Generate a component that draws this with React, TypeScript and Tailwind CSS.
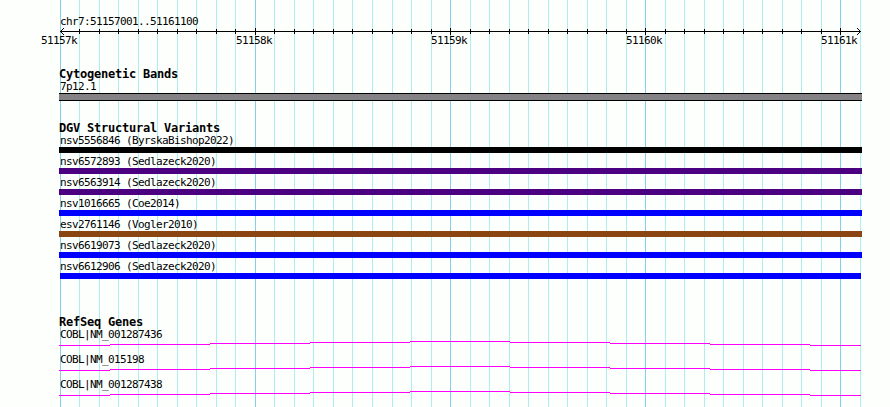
const START = 51157001;
const PX_PER_BASE = 800 / 4100;

const toX = (base: number) => 60 + Math.round((base - START) * PX_PER_BASE);

const gridLines = Array.from({ length: 42 }, (_, i) => ({
  x: toX(51157000 + i * 100),
  major: i % 10 === 0,
}));

const scaleLabels = [
  { x: 41, text: '51157k' },
  { x: 236, text: '51158k' },
  { x: 431, text: '51159k' },
  { x: 626, text: '51160k' },
  { x: 821, text: '51161k' },
];

const variants = [
  { label: 'nsv5556846 (ByrskaBishop2022)', bar: 'bg-black ml-[59px] w-[803px]' },
  { label: 'nsv6572893 (Sedlazeck2020)', bar: 'bg-[#4b0082] ml-[59px] w-[803px]' },
  { label: 'nsv6563914 (Sedlazeck2020)', bar: 'bg-[#4b0082] ml-[59px] w-[803px]' },
  { label: 'nsv1016665 (Coe2014)', bar: 'bg-[#0000ff] ml-[59px] w-[803px]' },
  { label: 'esv2761146 (Vogler2010)', bar: 'bg-[#8b4513] ml-[59px] w-[803px]' },
  { label: 'nsv6619073 (Sedlazeck2020)', bar: 'bg-[#0000ff] ml-[59px] w-[803px]' },
  { label: 'nsv6612906 (Sedlazeck2020)', bar: 'bg-[#0000ff] ml-[60px] w-[801px]' },
];

const genes = ['COBL|NM_001287436', 'COBL|NM_015198', 'COBL|NM_001287438'];

function Grid() {
  return (
    <svg className="absolute inset-0" width="890" height="407" shapeRendering="crispEdges">
      {gridLines.map((l) => (
        <rect key={l.x} x={l.x} y="0" width="1" height="407" fill={l.major ? '#87ceeb' : '#afeeee'} />
      ))}
    </svg>
  );
}

function Ruler() {
  return (
    <svg className="-mt-px block h-5 w-full shrink-0" shapeRendering="crispEdges">
      <rect x="60" y="4" width="801" height="1" />
      {gridLines.slice(1, -1).map((l) => (
        <rect key={l.x} x={l.x} y={l.major ? 1 : 2} width="1" height={l.major ? 7 : 5} />
      ))}
      <path d="M61 3h1v1h-1zM62 2h1v1h-1zM63 1h1v1h-1zM61 5h1v1h-1zM62 6h1v1h-1zM63 7h1v1h-1z" />
      <path d="M859 3h1v1h-1zM858 2h1v1h-1zM857 1h1v1h-1zM859 5h1v1h-1zM858 6h1v1h-1zM857 7h1v1h-1z" />
      {scaleLabels.map((l) => (
        <text key={l.text} x={l.x} y="17" className="text-[11px] tracking-[-0.62px]">
          {l.text}
        </text>
      ))}
    </svg>
  );
}

// The intron line is a shallow arc that moves one pixel per step
function Intron() {
  return (
    <svg className="block h-[5px] w-full" fill="#ff00ff" shapeRendering="crispEdges">
      <rect x="59" y="4" width="51" height="1" />
      <rect x="110" y="3" width="100" height="1" />
      <rect x="210" y="2" width="100" height="1" />
      <rect x="310" y="1" width="100" height="1" />
      <rect x="410" y="0" width="100" height="1" />
      <rect x="510" y="1" width="100" height="1" />
      <rect x="610" y="2" width="100" height="1" />
      <rect x="710" y="3" width="100" height="1" />
      <rect x="810" y="4" width="51" height="1" />
    </svg>
  );
}

function TrackTitle({ children }: { children: string }) {
  return <h2 className="h-3 pl-[59px] text-[12px] leading-3 font-bold tracking-[-0.22px]">{children}</h2>;
}

function Label({ children }: { children: string }) {
  return <div className="h-[13px] pl-[60px] leading-[14px]">{children}</div>;
}

export default function App() {
  return (
    <div className="relative h-[407px] w-[890px] overflow-hidden bg-[#fdfffc] font-['DejaVu_Sans_Mono',monospace] text-[11px] tracking-[-0.62px] whitespace-pre text-black">
      <Grid />
      <div className="relative flex flex-col pt-[15px]">
        <Label>chr7:51157001..51161100</Label>
        <Ruler />

        {/* Cytogenetic bands */}
        <section className="pt-[21px]">
          <TrackTitle>Cytogenetic Bands</TrackTitle>
          <Label>7p12.1</Label>
          <div className="ml-[59px] h-2 w-[803px] border-y border-black bg-[#848284]" />
        </section>

        {/* Structural variants */}
        <section className="pt-[21px]">
          <TrackTitle>DGV Structural Variants</TrackTitle>
          <div className="flex flex-col gap-0.5">
            {variants.map((v) => (
              <div key={v.label}>
                <Label>{v.label}</Label>
                <div className={`h-1.5 ${v.bar}`} />
              </div>
            ))}
          </div>
        </section>

        {/* Genes */}
        <section className="pt-[37px]">
          <TrackTitle>RefSeq Genes</TrackTitle>
          <div className="flex flex-col gap-[7px]">
            {genes.map((g) => (
              <div key={g}>
                <Label>{g}</Label>
                <Intron />
              </div>
            ))}
          </div>
        </section>
      </div>
    </div>
  );
}
